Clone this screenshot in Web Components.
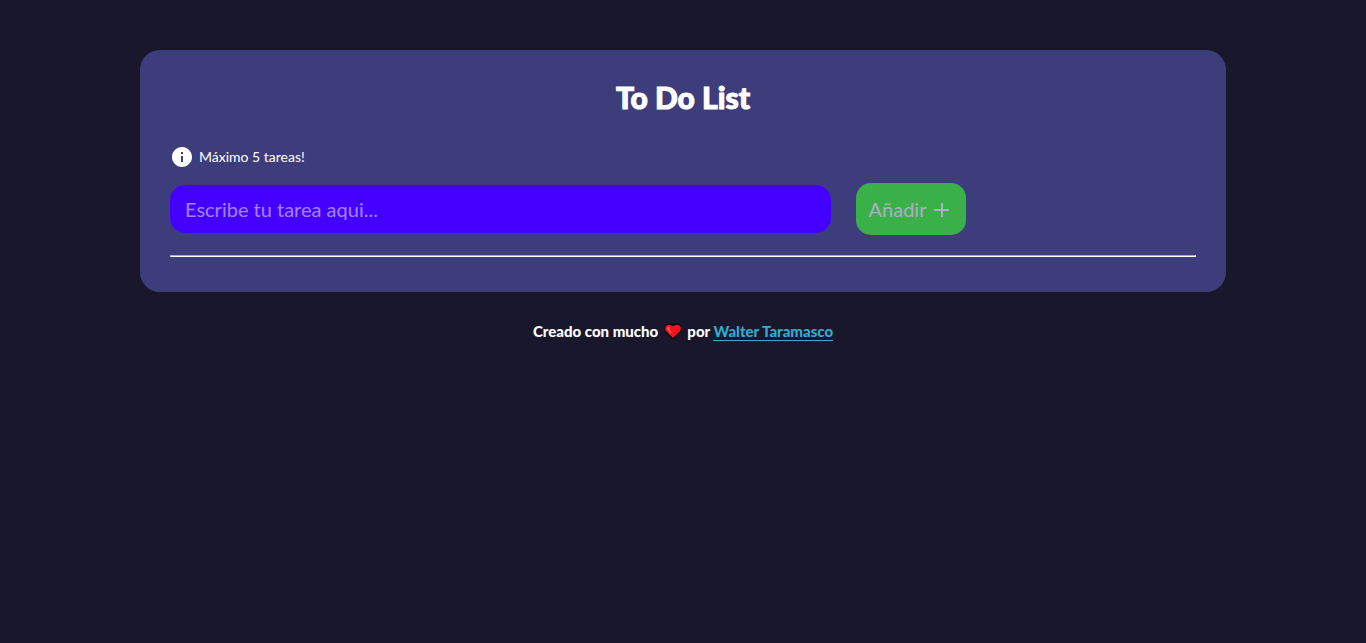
<!DOCTYPE html>
<html lang="es">
<head>
<meta charset="utf-8">
<meta name="viewport" content="width=device-width, initial-scale=1">
<title>To Do List</title>
<style>
body { margin: 0; background: #19172c; color: #fff; font: 15px/20px Lato, "Liberation Sans", sans-serif; }
</style>
</head>
<body>
<todo-app></todo-app>

<template id="app-t">
<style>
:host { display: block; padding: 50px 20px; }
@media (min-width: 1000px) { :host { padding: 50px 140px; } }
</style>
<todo-card heading="To Do List">
  <todo-note>Máximo 5 tareas!</todo-note>
  <todo-form></todo-form>
</todo-card>
<todo-footer><a href="#autor">Walter Taramasco</a></todo-footer>
</template>

<template id="card-t">
<style>
:host { display: block; padding: 27px 30px 35px; border-radius: 20px; background: #3e3d7c; }
h1 { margin: 0 0 28px; font-size: 30px; line-height: 40px; font-weight: 900; text-align: center; -webkit-text-stroke: 1px currentColor; }
hr { margin: 20px 0 0; border: 1px inset #fff; }
</style>
<h1></h1>
<slot></slot>
<hr>
</template>

<template id="note-t">
<style>
:host { display: flex; align-items: center; gap: 5px; height: 24px; margin-bottom: 14px; font-size: 14px; }
svg { width: 24px; height: 24px; fill: currentColor; }
</style>
<svg viewBox="0 0 24 24" aria-hidden="true"><path d="M12 2C6.486 2 2 6.486 2 12s4.486 10 10 10 10-4.486 10-10S17.514 2 12 2zm1 15h-2v-6h2v6zm0-8h-2V7h2v2z"/></svg>
<span><slot></slot></span>
</template>

<template id="form-t">
<style>
:host { display: block; max-width: 796px; }
form { display: flex; align-items: center; gap: 25px; }
input { flex: 1; min-width: 0; height: 48px; box-sizing: border-box; padding: 0 15px; border: 0; border-radius: 15px; background: #40f; color: #fff; font: 20px/24px Lato, sans-serif; outline: none; }
input::placeholder { color: #fff; opacity: .5; }
button { display: flex; align-items: center; justify-content: center; gap: 3px; width: 110px; height: 52px; padding: 0; border: 0; border-radius: 15px; background: #39b148; color: #b0adc8; font: 20px/24px Lato, sans-serif; }
svg { width: 24px; height: 24px; fill: currentColor; }
</style>
<form>
  <input type="text" aria-label="Tarea" placeholder="Escribe tu tarea aqui...">
  <button type="button" disabled><span>Añadir</span><svg viewBox="0 0 24 24" aria-hidden="true"><path d="M20 12h-6V6h-2v6H5v2h7v6h2v-6h6z"/></svg></button>
</form>
</template>

<template id="footer-t">
<style>
:host { display: flex; justify-content: center; align-items: center; margin-top: 29px; font-weight: 900; white-space: pre; }
svg { width: 20px; height: 20px; margin: 0 1px; }
::slotted(a) { color: #2eadcf; text-decoration: none; border-bottom: 1px solid #2eadcf; line-height: 18px; }
</style>
<span>Creado con mucho </span><svg viewBox="0 0 20 20" role="img" aria-label="corazón"><path d="M10 18.500 2.200 11C-.5 5.500 4.500-.2 10 3.400c5.500-3.600 10.500 2.100 7.800 7.600z" fill="#08070d"/><path d="M10 17 2.800 10C.3 5.500 5.500 1.500 10 5.500c4.500-4 9.700 0 7.200 4.500z" fill="#ed1520"/><path d="M4.300 7.300C4.800 5.500 6.500 5.500 7 6.800L6 8l3 3.500-.7.700C6 10.700 4 9.200 4.300 7.300z" fill="#f66850"/></svg><span> por </span><slot></slot>
</template>

<script>
class TodoBase extends HTMLElement {
  constructor() {
    super();
    this.attachShadow({ mode: "open" }).append(
      document.getElementById(this.constructor.template).content.cloneNode(true));
  }
}
customElements.define("todo-card", class extends TodoBase {
  static template = "card-t";
  connectedCallback() { this.shadowRoot.querySelector("h1").textContent = this.getAttribute("heading"); }
});
customElements.define("todo-note", class extends TodoBase { static template = "note-t"; });
customElements.define("todo-form", class extends TodoBase {
  static template = "form-t";
  connectedCallback() {
    const input = this.shadowRoot.querySelector("input");
    const button = this.shadowRoot.querySelector("button");
    input.addEventListener("input", () => { button.disabled = !input.value.trim(); });
  }
});
customElements.define("todo-footer", class extends TodoBase { static template = "footer-t"; });
customElements.define("todo-app", class extends TodoBase { static template = "app-t"; });
</script>
</body>
</html>
